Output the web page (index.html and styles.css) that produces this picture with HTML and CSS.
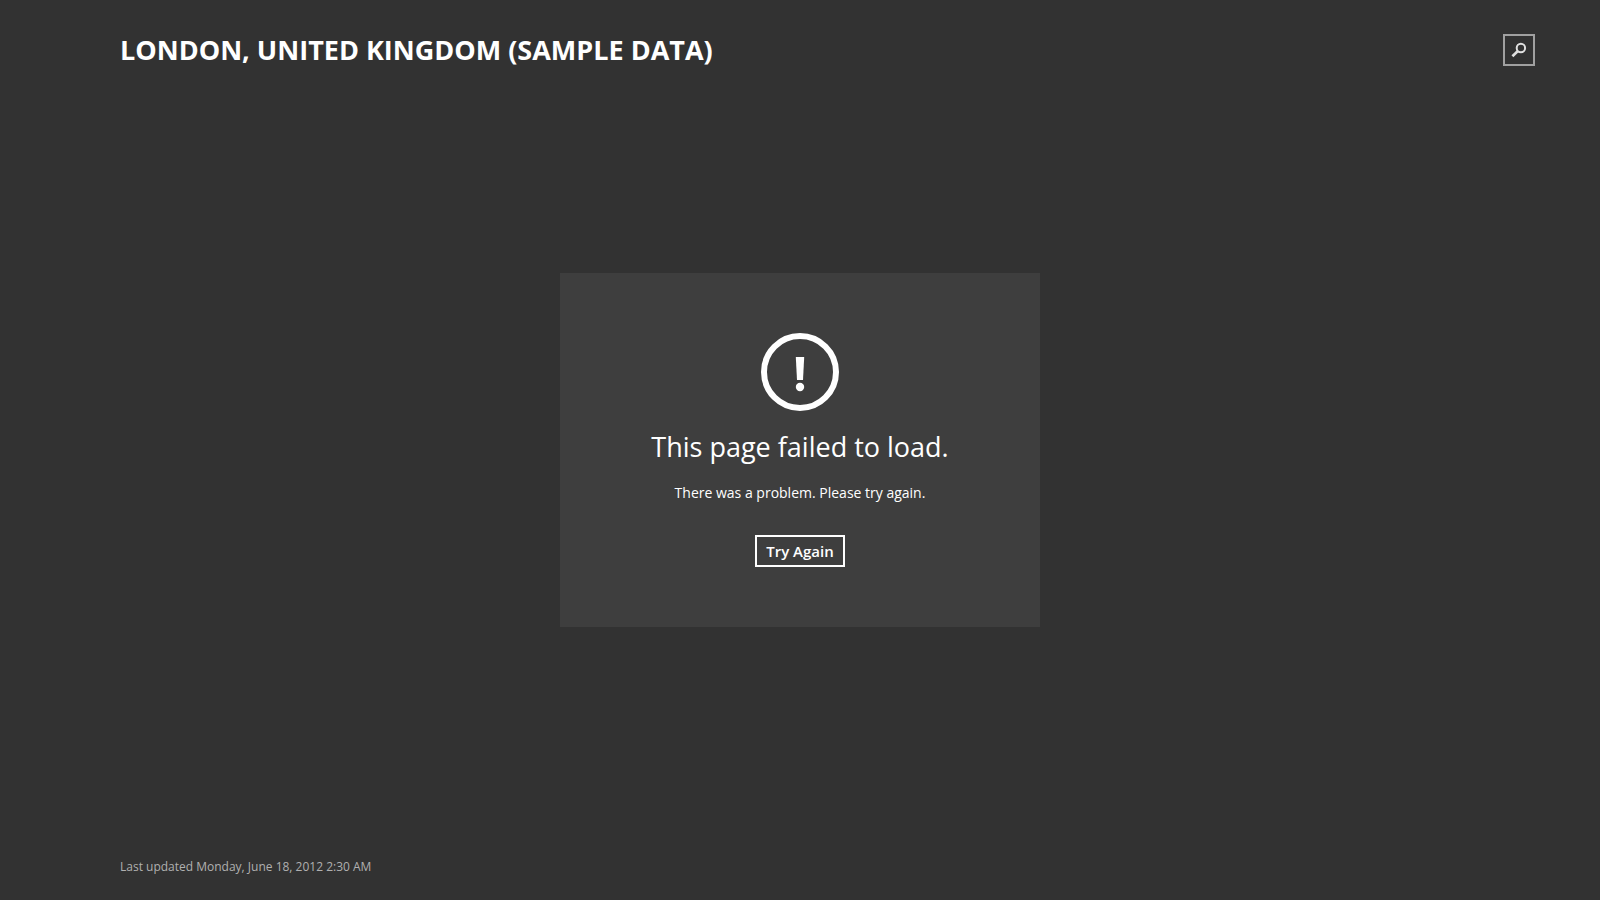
FILE: index.html
```html
<!DOCTYPE html>
<html lang="en">
<head>
<meta charset="utf-8">
<title>Weather</title>
<link rel="stylesheet" href="styles.css">
</head>
<body>
<div class="app">
  <header class="header">
    <h1 class="location">LONDON, UNITED KINGDOM (SAMPLE DATA)</h1>
    <button class="search" type="button" aria-label="Search">
      <svg class="search-icon" viewBox="0 0 16 16" aria-hidden="true">
        <circle cx="9.9" cy="6" r="4.200" fill="none" stroke="currentColor" stroke-width="2"/>
        <path d="M6.9 9 1.400 14.200" stroke="currentColor" stroke-width="2.600"/>
      </svg>
    </button>
  </header>
  <main class="content">
    <section class="message">
      <svg class="alert-icon" viewBox="0 0 78 78" aria-hidden="true">
        <circle cx="39" cy="39" r="36" fill="none" stroke="currentColor" stroke-width="6"/>
        <path d="M34.8 24h8.400L42 47h-6z" fill="currentColor"/>
        <circle cx="39" cy="54" r="4.200" fill="currentColor"/>
      </svg>
      <h2 class="message-title">This page failed to load.</h2>
      <p class="message-text">There was a problem. Please try again.</p>
      <button class="retry" type="button">Try Again</button>
    </section>
  </main>
  <footer class="footer">Last updated Monday, June 18, 2012 2:30 AM</footer>
</div>
</body>
</html>
```
FILE: styles.css
```css
* {
  box-sizing: border-box;
}

body {
  margin: 0;
  background: #323232;
  color: #fff;
  font-family: "Open Sans", "Noto Sans", sans-serif;
}

.app {
  display: flex;
  flex-direction: column;
  min-height: 100vh;
}

.header {
  display: flex;
  align-items: center;
  justify-content: space-between;
  height: 100px;
  padding: 0 65px 0 120px;
}

.location {
  margin: 0;
  font-size: 27px;
  line-height: 40px;
  font-weight: 700;
}

.search {
  display: grid;
  place-items: center;
  width: 32px;
  height: 32px;
  padding: 0;
  border: 2px solid #a0a0a0;
  background: none;
  color: #e0e0e0;
}

.search-icon {
  width: 16px;
  height: 16px;
}

.content {
  flex: 1;
  display: flex;
  align-items: center;
  justify-content: center;
}

.message {
  display: flex;
  flex-direction: column;
  align-items: center;
  width: 480px;
  padding: 60px 40px;
  background: #3e3e3e;
  text-align: center;
}

.alert-icon {
  width: 78px;
  height: 78px;
}

.message-title {
  margin: 16px 0;
  font-size: 27px;
  line-height: 40px;
  font-weight: 400;
}

.message-text {
  margin: 0 0 32px;
  font-size: 14px;
  line-height: 20px;
}

.retry {
  height: 32px;
  padding: 0 9px;
  border: 2px solid #fff;
  background: none;
  color: #fff;
  font: 600 15px/24px "Open Sans", "Noto Sans", sans-serif;
}

.footer {
  display: flex;
  align-items: flex-end;
  height: 100px;
  padding: 0 120px 24px;
  color: #b0b0b0;
  font-size: 12px;
  line-height: 18px;
}
```
